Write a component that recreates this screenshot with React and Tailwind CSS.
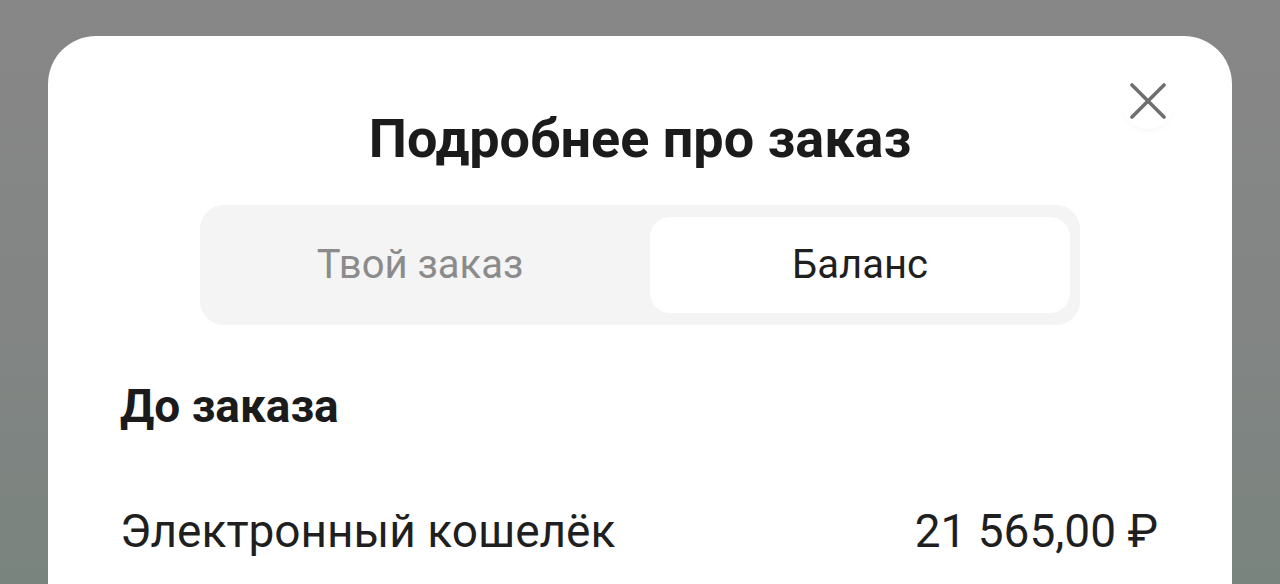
export default function App() {
  return (
    <div
      className="h-[584px] w-[1280px] overflow-hidden bg-gradient-to-b from-[#878787] via-[#838584] to-[#7a847f] px-[48px] pt-[36px]"
      style={{ fontFamily: "Roboto, 'Noto Sans', sans-serif" }}
    >
      <div className="relative h-[600px] rounded-t-[48px] bg-white px-[72px] pt-[73px]">
        {/* close button */}
        <button className="absolute right-[56px] top-[37px] flex h-[56px] w-[56px] items-center justify-center rounded-full bg-white shadow-[0_6px_10px_-6px_rgba(0,0,0,0.06)]">
          <svg width="36" height="36" viewBox="0 0 36 36" fill="none">
            <path
              d="M2 2L34 34M34 2L2 34"
              stroke="#6f6f6f"
              strokeWidth="3.6"
              strokeLinecap="round"
            />
          </svg>
        </button>

        <h1 className="text-center text-[54px] font-bold leading-[60px] text-[#1b1b1b]">
          Подробнее про заказ
        </h1>

        {/* segmented tabs */}
        <div className="mx-auto mt-[36px] grid w-[880px] grid-cols-2 gap-[20px] rounded-[24px] bg-[#f4f4f4] px-[10px] py-[12px]">
          <div className="flex h-[96px] items-center justify-center text-[40px] text-[#8b8b8b]">
            Твой заказ
          </div>
          <div className="flex h-[96px] items-center justify-center rounded-[20px] bg-white text-[40px] text-[#1f1f1f]">
            Баланс
          </div>
        </div>

        <h2 className="mt-[55px] text-[46px] font-bold leading-[52px] text-[#1b1b1b]">
          До заказа
        </h2>

        <div className="mt-[73px] flex items-center justify-between text-[46px] leading-[52px] text-[#1f1f1f]">
          <span>Электронный кошелёк</span>
          <span className="mr-[2px]">21 565,00 ₽</span>
        </div>
      </div>
    </div>
  );
}
